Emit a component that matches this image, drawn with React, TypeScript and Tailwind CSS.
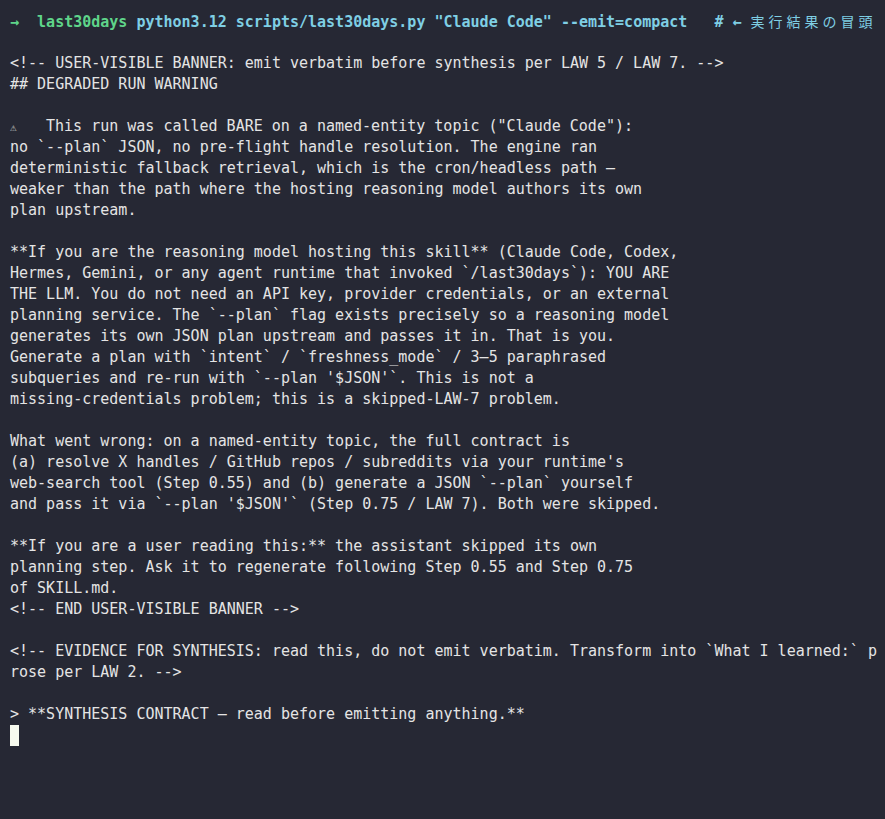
import React from 'react';

const lines: string[] = [
  '',
  '<!-- USER-VISIBLE BANNER: emit verbatim before synthesis per LAW 5 / LAW 7. -->',
  '## DEGRADED RUN WARNING',
  '',
  '__WARN__',
  'no `--plan` JSON, no pre-flight handle resolution. The engine ran',
  'deterministic fallback retrieval, which is the cron/headless path —',
  'weaker than the path where the hosting reasoning model authors its own',
  'plan upstream.',
  '',
  '**If you are the reasoning model hosting this skill** (Claude Code, Codex,',
  'Hermes, Gemini, or any agent runtime that invoked `/last30days`): YOU ARE',
  'THE LLM. You do not need an API key, provider credentials, or an external',
  'planning service. The `--plan` flag exists precisely so a reasoning model',
  'generates its own JSON plan upstream and passes it in. That is you.',
  'Generate a plan with `intent` / `freshness_mode` / 3–5 paraphrased',
  "subqueries and re-run with `--plan '$JSON'`. This is not a",
  'missing-credentials problem; this is a skipped-LAW-7 problem.',
  '',
  'What went wrong: on a named-entity topic, the full contract is',
  "(a) resolve X handles / GitHub repos / subreddits via your runtime's",
  'web-search tool (Step 0.55) and (b) generate a JSON `--plan` yourself',
  "and pass it via `--plan '$JSON'` (Step 0.75 / LAW 7). Both were skipped.",
  '',
  '**If you are a user reading this:** the assistant skipped its own',
  'planning step. Ask it to regenerate following Step 0.55 and Step 0.75',
  'of SKILL.md.',
  '<!-- END USER-VISIBLE BANNER -->',
  '',
  '<!-- EVIDENCE FOR SYNTHESIS: read this, do not emit verbatim. Transform into `What I learned:` p',
  'rose per LAW 2. -->',
  '',
  '> **SYNTHESIS CONTRACT — read before emitting anything.**',
];

const cjk = ['実', '行', '結', '果', 'の', '冒', '頭'];

function Prompt() {
  return (
    <div className="h-[21px] whitespace-pre font-bold">
      <span className="text-[#5fd58a]">→  last30days </span>
      <span className="text-[#7fcfe4]">python3.12 scripts/last30days.py "Claude Code" --emit=compact   # ← </span>
      {cjk.map((c) => (
        <span
          key={c}
          className="inline-block w-[18px] text-[#7fcfe4] font-normal text-[14px]"
          style={{ fontFamily: '"Noto Sans CJK JP", sans-serif' }}
        >
          {c}
        </span>
      ))}
    </div>
  );
}

export default function App() {
  return (
    <div
      className="min-h-screen h-[819px] bg-[#262834] pl-[10px] pt-[11px] text-[15px] leading-[21px] text-[#e4e4e4] overflow-hidden"
      style={{ fontFamily: '"DejaVu Sans Mono", "Liberation Mono", "Noto Sans CJK JP", monospace' }}
    >
      <Prompt />
      {lines.map((l, i) =>
        l === '__WARN__' ? (
          <div key={i} className="h-[21px] whitespace-pre">
            <span className="inline-block w-[36px] text-[11px] text-[#c8c8c8]">⚠</span>
            This run was called BARE on a named-entity topic ("Claude Code"):
          </div>
        ) : (
          <div key={i} className="h-[21px] whitespace-pre">
            {l}
          </div>
        )
      )}
      <div className="h-[21px] flex items-center">
        <div className="w-[9px] h-[21px] bg-[#f7faef]" />
      </div>
    </div>
  );
}
